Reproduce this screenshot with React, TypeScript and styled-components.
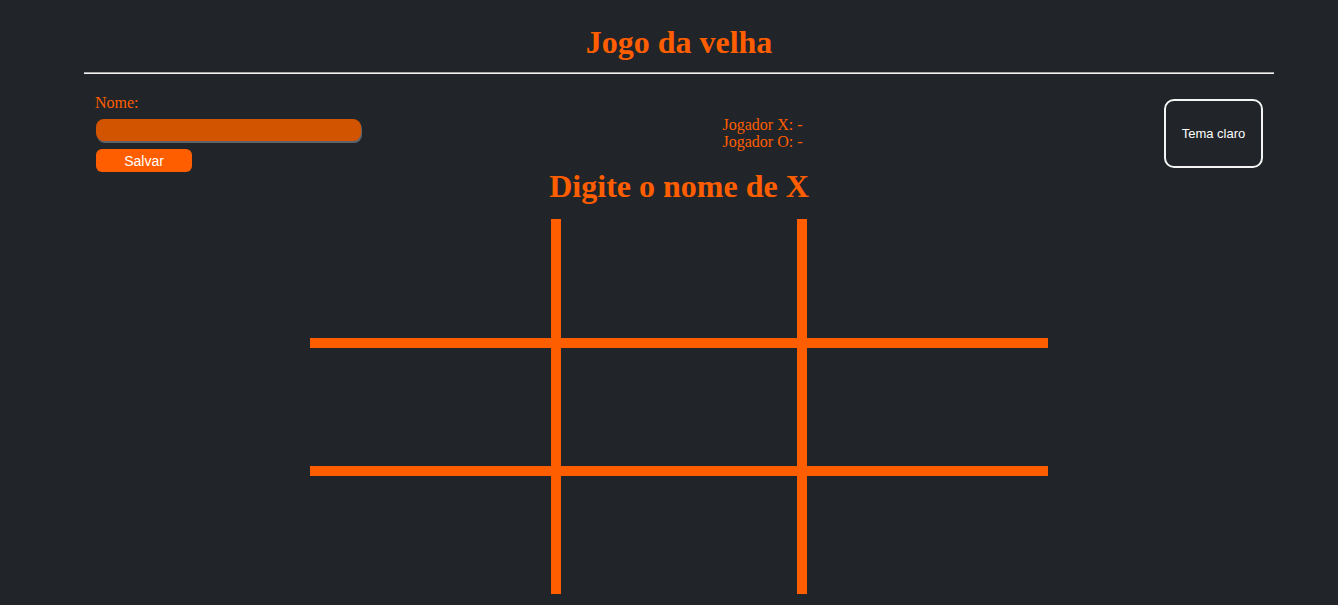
import React from "react";
import styled, { createGlobalStyle } from "styled-components";

const ORANGE = "#ff5e00";

const GlobalStyle = createGlobalStyle`
  html, body {
    margin: 0;
    padding: 0;
    background: #212428;
  }
  body {
    font-family: "Liberation Serif", "Times New Roman", serif;
  }
`;

const Page = styled.div`
  padding: 0 64px 0 84px;
  min-height: 605px;
  box-sizing: border-box;
`;

const Title = styled.h1`
  margin: 0;
  padding-top: 24px;
  font-family: "Liberation Serif", serif;
  font-size: 32px;
  font-weight: bold;
  line-height: 37px;
  color: ${ORANGE};
  text-align: center;
`;

const Divider = styled.hr`
  margin: 11px 0 0;
  height: 0;
  border: none;
  border-top: 1px solid #a8a8a8;
  border-bottom: 1px solid #f2f2f2;
`;

const TopRow = styled.div`
  display: flex;
  justify-content: space-between;
  align-items: center;
  padding: 0 11px;
  margin-top: 20px;
`;

const NameForm = styled.form`
  display: flex;
  flex-direction: column;
  align-items: flex-start;
`;

const Label = styled.label`
  font-family: "Liberation Serif", serif;
  font-size: 16px;
  line-height: 18px;
  color: ${ORANGE};
  margin-bottom: 7px;
`;

const NameInput = styled.input`
  margin: 0 0 8px 1px;
  width: 265px;
  height: 22px;
  box-sizing: border-box;
  border: none;
  border-radius: 8px;
  background: #d35400;
  box-shadow: 1px 2px 0 0 #5f6368;
  outline: none;
`;

const SaveButton = styled.button`
  margin: 0 0 0 1px;
  width: 96px;
  height: 23px;
  border: none;
  border-radius: 6px;
  background: ${ORANGE};
  color: #ffffff;
  font-family: "Liberation Sans", Arial, sans-serif;
  font-size: 14px;
  padding: 0;
  cursor: pointer;
`;

const Players = styled.div`
  font-family: "Liberation Serif", serif;
  font-size: 16px;
  line-height: 17px;
  color: ${ORANGE};
`;

const ThemeButton = styled.button`
  width: 99px;
  height: 69px;
  box-sizing: border-box;
  border: 2px solid #f4f4f4;
  border-radius: 10px;
  background: transparent;
  color: #ffffff;
  font-family: "Liberation Sans", Arial, sans-serif;
  font-size: 13px;
  padding: 0;
  cursor: pointer;
`;

const Status = styled.h2`
  margin: 0;
  font-family: "Liberation Serif", serif;
  font-size: 32px;
  font-weight: bold;
  line-height: 28px;
  color: ${ORANGE};
  text-align: center;
`;

const Board = styled.div`
  display: grid;
  grid-template-columns: repeat(3, 246px);
  grid-template-rows: 124px 128px 123px;
  justify-content: center;
  margin-top: 19px;
`;

const Cell = styled.div<{ $row: number; $col: number }>`
  box-sizing: border-box;
  border-style: solid;
  border-color: ${ORANGE};
  border-top-width: ${(p) => (p.$row > 0 ? 5 : 0)}px;
  border-bottom-width: ${(p) => (p.$row < 2 ? 5 : 0)}px;
  border-left-width: ${(p) => (p.$col > 0 ? 5 : 0)}px;
  border-right-width: ${(p) => (p.$col < 2 ? 5 : 0)}px;
`;

export default function App() {
  const cells = Array.from({ length: 9 }, (_, i) => i);
  return (
    <>
      <GlobalStyle />
      <Page>
        <Title>Jogo da velha</Title>
        <Divider />
        <TopRow>
          <NameForm onSubmit={(e) => e.preventDefault()}>
            <Label htmlFor="nome">Nome:</Label>
            <NameInput id="nome" type="text" />
            <SaveButton type="submit">Salvar</SaveButton>
          </NameForm>
          <Players>
            <div>Jogador X: -</div>
            <div>Jogador O: -</div>
          </Players>
          <ThemeButton type="button">Tema claro</ThemeButton>
        </TopRow>
        <Status>Digite o nome de X</Status>
        <Board>
          {cells.map((i) => (
            <Cell key={i} $row={Math.floor(i / 3)} $col={i % 3} />
          ))}
        </Board>
      </Page>
    </>
  );
}
